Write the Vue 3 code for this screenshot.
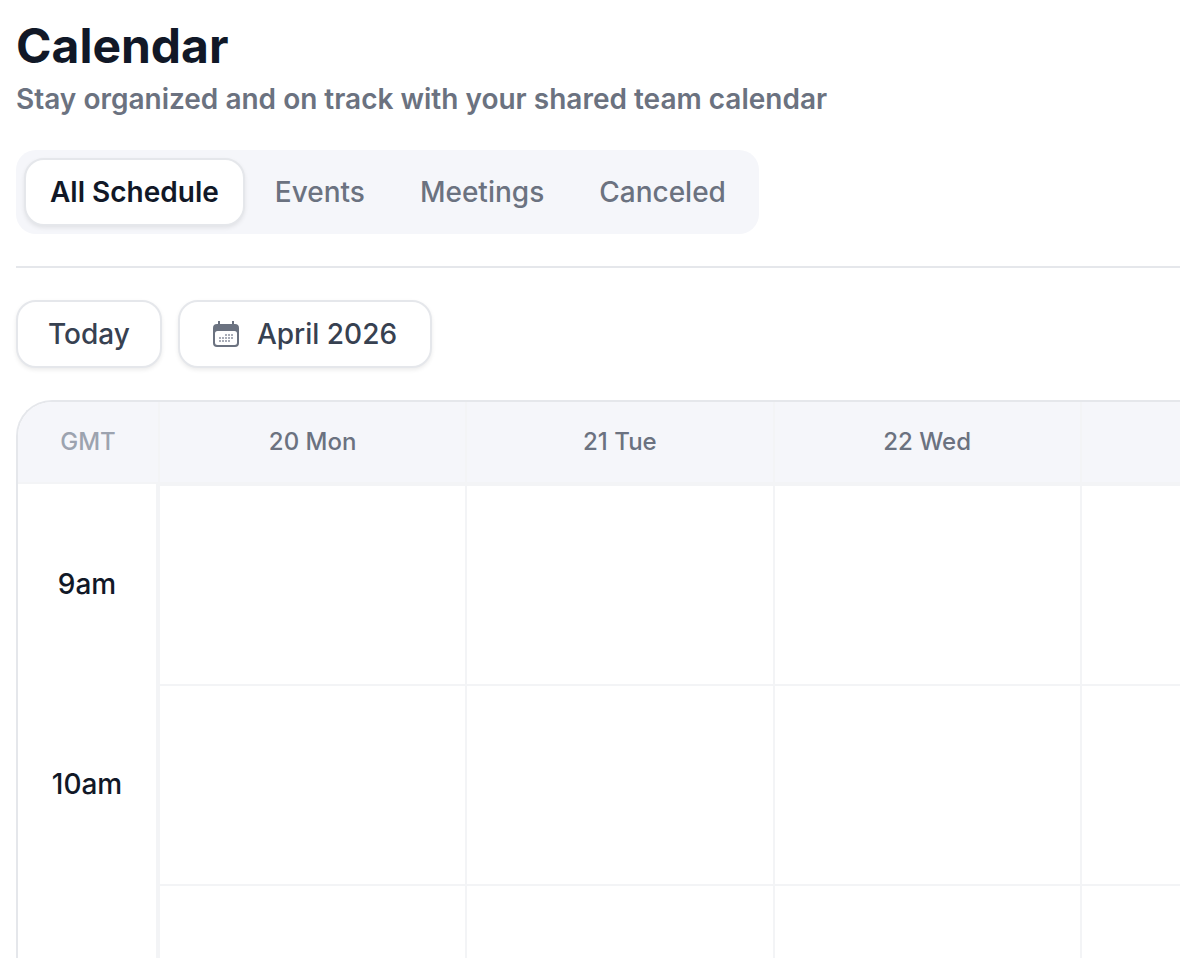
<script setup>
import { ref } from 'vue'

const tabs = ['All Schedule', 'Events', 'Meetings', 'Canceled']
const activeTab = ref('All Schedule')

// the last day and hour are open slots without a label
const days = ['20 Mon', '21 Tue', '22 Wed', '']
const hours = ['9am', '10am', '']

// dots of the calendar icon, the first row starts two dots later
const dots = [
  { y: 13, xs: [12, 15, 18] },
  { y: 16, xs: [6, 9, 12, 15, 18] },
  { y: 19, xs: [6, 9, 12, 15] }
]
</script>

<template>
  <main class="calendar-page">
    <header class="page-header">
      <h1>Calendar</h1>
      <p>Stay organized and on track with your shared team calendar</p>
    </header>

    <div class="tabs" role="tablist">
      <button
        v-for="tab in tabs"
        :key="tab"
        type="button"
        role="tab"
        class="tab"
        :class="{ active: tab === activeTab }"
        :aria-selected="tab === activeTab"
        @click="activeTab = tab"
      >
        {{ tab }}
      </button>
    </div>

    <div class="toolbar">
      <button type="button" class="control">Today</button>
      <button type="button" class="control date-control">
        <svg width="26" height="26" viewBox="0 0 26 26" aria-hidden="true">
          <path
            fill="#6b7280"
            fill-rule="evenodd"
            d="M5 0h2v3h12V0h2v3h1a4 4 0 0 1 4 4v15a4 4 0 0 1-4 4H4a4 4 0 0 1-4-4V7a4 4 0 0 1 4-4h1zM4.500 10A2.500 2.500 0 0 0 2 12.500v9A2.500 2.500 0 0 0 4.500 24h17a2.500 2.500 0 0 0 2.500-2.500v-9a2.500 2.500 0 0 0-2.500-2.500z"
          />
          <g fill="#a9adb8">
            <template v-for="row in dots" :key="row.y">
              <rect v-for="x in row.xs" :key="x" :x="x" :y="row.y" width="2" height="2" />
            </template>
          </g>
        </svg>
        <span>April 2026</span>
      </button>
    </div>

    <div class="schedule">
      <table>
        <thead>
          <tr>
            <th class="zone" scope="col">GMT</th>
            <th v-for="day in days" :key="day" class="day" scope="col">{{ day }}</th>
          </tr>
        </thead>
        <tbody>
          <tr v-for="hour in hours" :key="hour">
            <th class="hour" scope="row">{{ hour }}</th>
            <td v-for="day in days" :key="day" class="slot"></td>
          </tr>
        </tbody>
      </table>
    </div>
  </main>
</template>

<style>
body {
  margin: 0;
  background-color: #fff;
}
</style>

<style scoped>
.calendar-page {
  height: 100vh;
  box-sizing: border-box;
  padding: 18px 0 0 16px;
  display: flex;
  flex-direction: column;
  overflow: hidden;
  font-family: Inter, 'Liberation Sans', sans-serif;
  color: #111827;
}

h1 {
  margin: 0;
  font-size: 48px;
  line-height: 56px;
  font-weight: 700;
}

.page-header p {
  margin: 6px 0 0;
  font-size: 28px;
  line-height: 38px;
  font-weight: 600;
  color: #6b7280;
}

.tabs {
  align-self: flex-start;
  margin-top: 32px;
  padding: 8px;
  display: flex;
  gap: 5px;
  border-radius: 20px;
  background-color: #f5f6fa;
}

.tab,
.control {
  box-sizing: border-box;
  height: 68px;
  border: 2px solid transparent;
  border-radius: 20px;
  font-family: inherit;
  font-size: 28px;
  line-height: 40px;
  font-weight: 500;
  white-space: nowrap;
  cursor: pointer;
}

.tab {
  padding: 0 23px;
  background-color: transparent;
  color: #6b7280;
}

.tab.active {
  padding: 0 24px;
  border-color: #e5e7eb;
  background-color: #fff;
  font-weight: 600;
  color: #111827;
  box-shadow: 0 2px 4px rgba(0, 0, 0, 0.08);
}

.toolbar {
  margin-top: 32px;
  padding-top: 32px;
  display: flex;
  gap: 16px;
  border-top: 2px solid #e5e7eb;
}

.control {
  padding: 0 30px;
  border-color: #e5e7eb;
  background-color: #fff;
  color: #374151;
  box-shadow: 0 2px 4px rgba(0, 0, 0, 0.08);
}

.date-control {
  padding: 0 33px;
  display: flex;
  align-items: center;
  gap: 18px;
}

.schedule {
  flex: 1;
  margin-top: 32px;
  overflow: hidden;
  border: 2px solid #e5e7eb;
  border-width: 2px 0 0 2px;
  border-radius: 36px 0 0 0;
}

table {
  width: 100%;
  min-width: 1369px;
  table-layout: fixed;
  border-spacing: 0;
}

th,
td {
  box-sizing: border-box;
  padding: 0;
}

.zone,
.day {
  height: 82px;
  border-bottom: 2px solid #f3f4f6;
  background-color: #f5f6fa;
  font-size: 24px;
  line-height: 32px;
  font-weight: 500;
  color: #6b7280;
}

.zone {
  width: 140px;
  color: #9ca3af;
}

.day {
  border-left: 2px solid #f3f4f6;
}

.hour {
  height: 200px;
  border-right: 2px solid #f3f4f6;
  font-size: 28px;
  line-height: 40px;
  font-weight: 500;
}

.slot {
  border-top: 2px solid #f3f4f6;
  border-left: 2px solid #f3f4f6;
}
</style>
